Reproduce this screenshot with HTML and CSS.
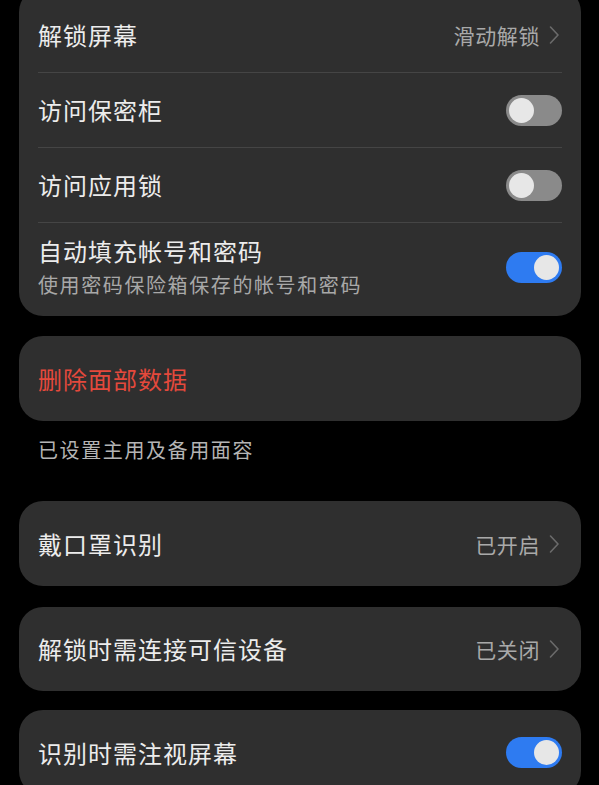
FILE: index.html
```html
<!DOCTYPE html>
<html lang="zh-CN">
<head>
<meta charset="utf-8">
<title>面部识别</title>
<link rel="stylesheet" href="styles.css">
</head>
<body>
<div class="page">
  <section class="card card-top">
    <div class="row">
      <span class="title">解锁屏幕</span>
      <span class="value">滑动解锁<svg class="chev" viewBox="0 0 14 20" width="14" height="20"><path d="M3.5 2 L11 10 L3.5 18" fill="none" stroke="#6b6b6b" stroke-width="1.6" stroke-linecap="round" stroke-linejoin="round"/></svg></span>
    </div>
    <div class="row divided">
      <span class="title">访问保密柜</span>
      <span class="toggle off"><span class="knob"></span></span>
    </div>
    <div class="row divided">
      <span class="title">访问应用锁</span>
      <span class="toggle off"><span class="knob"></span></span>
    </div>
    <div class="row divided row-tall">
      <div class="stack">
        <span class="title">自动填充帐号和密码</span>
        <span class="sub">使用密码保险箱保存的帐号和密码</span>
      </div>
      <span class="toggle on"><span class="knob"></span></span>
    </div>
  </section>

  <section class="card card-single">
    <div class="row">
      <span class="title danger">删除面部数据</span>
    </div>
  </section>

  <p class="caption">已设置主用及备用面容</p>

  <section class="card card-single">
    <div class="row">
      <span class="title">戴口罩识别</span>
      <span class="value">已开启<svg class="chev" viewBox="0 0 14 20" width="14" height="20"><path d="M3.5 2 L11 10 L3.5 18" fill="none" stroke="#6b6b6b" stroke-width="1.6" stroke-linecap="round" stroke-linejoin="round"/></svg></span>
    </div>
  </section>

  <section class="card card-single gap short">
    <div class="row">
      <span class="title">解锁时需连接可信设备</span>
      <span class="value">已关闭<svg class="chev" viewBox="0 0 14 20" width="14" height="20"><path d="M3.5 2 L11 10 L3.5 18" fill="none" stroke="#6b6b6b" stroke-width="1.6" stroke-linecap="round" stroke-linejoin="round"/></svg></span>
    </div>
  </section>

  <section class="card card-single gap-last">
    <div class="row">
      <span class="title">识别时需注视屏幕</span>
      <span class="toggle on"><span class="knob"></span></span>
    </div>
  </section>
</div>
</body>
</html>
```

FILE: styles.css
```css
* { box-sizing: border-box; }

html, body {
  margin: 0;
  padding: 0;
  background: #000;
  height: 100%;
  overflow: hidden;
}

body {
  font-family: "Noto Sans CJK SC", "Noto Sans", sans-serif;
  color: #e9e9e9;
}

.page {
  padding: 0 18px 0 19px;
  display: flex;
  flex-direction: column;
}

.card {
  background: #2f2f2f;
  border-radius: 24px;
  padding: 0 19px;
}

.card-top {
  margin-top: -12px;
  padding-top: 10px;
  padding-bottom: 0;
}

.card-single {
  margin-top: 20px;
}

.card-single .row {
  height: 85px;
}

.card-single.short .row {
  height: 84px;
}

.card-single.gap {
  margin-top: 21px;
}

.card-single.gap-last {
  margin-top: 19px;
}

.row {
  display: flex;
  align-items: center;
  justify-content: space-between;
  height: 74px;
}

.row.divided {
  border-top: 1px solid #454545;
  height: 75px;
}

.row.row-tall {
  height: 94px;
  padding: 0 0 4px;
}

.stack {
  display: flex;
  flex-direction: column;
}

.title {
  font-size: 24px;
  letter-spacing: 1px;
  line-height: 34px;
  color: #ececec;
  white-space: nowrap;
}

.danger {
  color: #e4493c;
}

.sub {
  font-size: 20px;
  letter-spacing: 1.6px;
  line-height: 34px;
  color: #a8a8a8;
  white-space: nowrap;
}

.value {
  display: flex;
  align-items: center;
  font-size: 21px;
  letter-spacing: 0.6px;
  color: #a9a9a9;
  white-space: nowrap;
}

.chev {
  margin-left: 7px;
  margin-right: 1px;
  display: block;
}

.caption {
  margin: 14px 0 36px 19px;
  font-size: 20px;
  letter-spacing: 1.6px;
  line-height: 30px;
  color: #b4b4b4;
}

.caption + .card-single {
  margin-top: 0;
}

.toggle {
  position: relative;
  width: 56px;
  height: 31px;
  border-radius: 16px;
  flex: none;
}

.toggle.off {
  background: #8a8a8a;
}

.toggle.on {
  background: #2e7bf1;
}

.knob {
  position: absolute;
  top: 3px;
  width: 25px;
  height: 25px;
  border-radius: 50%;
  background: #e7e7e7;
}

.toggle.off .knob {
  left: 3px;
}

.toggle.on .knob {
  right: 3px;
}
```
